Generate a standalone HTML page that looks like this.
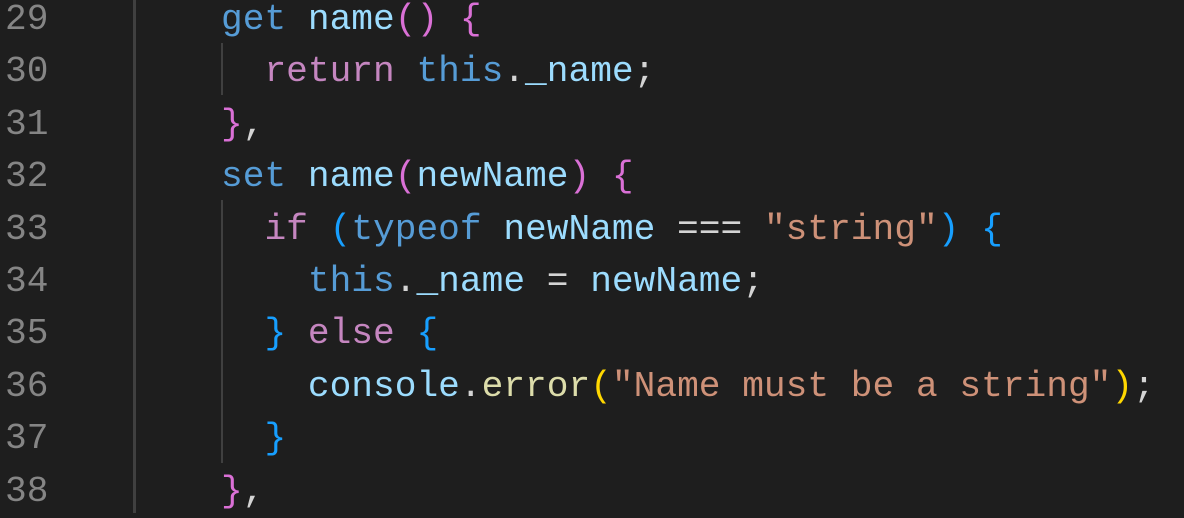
<!DOCTYPE html><html><head><style>
body{margin:0;width:1184px;height:513px;background:#1e1e1e;overflow:hidden;position:relative;font-family:"Liberation Mono",monospace;font-size:36.2px}
.l{position:absolute;left:0;height:52.4px;line-height:52.4px;white-space:pre;color:#d4d4d4}
.n{position:absolute;left:5px;color:#858585}
.c{position:absolute;left:221px}
.k{color:#569cd6}.p{color:#c586c0}.v{color:#9cdcfe}.f{color:#dcdcaa}.s{color:#ce9178}
.b1{color:#da70d6}.b2{color:#179fff}.b3{color:#ffd700}
.g{position:absolute;background:#404040}
</style></head><body>
<div class="g" style="left:133px;top:0;width:3px;height:513px"></div>
<div class="g" style="left:221px;top:43px;width:2px;height:52px"></div>
<div class="g" style="left:221px;top:200px;width:2px;height:263px"></div>
<div class="l" style="top:-6px"><span class="n">29</span><span class="c"><span class="k">get</span> <span class="v">name</span><span class="b1">()</span> <span class="b1">{</span></span></div>
<div class="l" style="top:46.4px"><span class="n">30</span><span class="c">  <span class="p">return</span> <span class="k">this</span>.<span class="v">_name</span>;</span></div>
<div class="l" style="top:98.8px"><span class="n">31</span><span class="c"><span class="b1">}</span>,</span></div>
<div class="l" style="top:151.2px"><span class="n">32</span><span class="c"><span class="k">set</span> <span class="v">name</span><span class="b1">(</span><span class="v">newName</span><span class="b1">)</span> <span class="b1">{</span></span></div>
<div class="l" style="top:203.6px"><span class="n">33</span><span class="c">  <span class="p">if</span> <span class="b2">(</span><span class="k">typeof</span> <span class="v">newName</span> === <span class="s">"string"</span><span class="b2">)</span> <span class="b2">{</span></span></div>
<div class="l" style="top:256px"><span class="n">34</span><span class="c">    <span class="k">this</span>.<span class="v">_name</span> = <span class="v">newName</span>;</span></div>
<div class="l" style="top:308.4px"><span class="n">35</span><span class="c">  <span class="b2">}</span> <span class="p">else</span> <span class="b2">{</span></span></div>
<div class="l" style="top:360.8px"><span class="n">36</span><span class="c">    <span class="v">console</span>.<span class="f">error</span><span class="b3">(</span><span class="s">"Name must be a string"</span><span class="b3">)</span>;</span></div>
<div class="l" style="top:413.2px"><span class="n">37</span><span class="c">  <span class="b2">}</span></span></div>
<div class="l" style="top:465.6px"><span class="n">38</span><span class="c"><span class="b1">}</span>,</span></div>
</body></html>
